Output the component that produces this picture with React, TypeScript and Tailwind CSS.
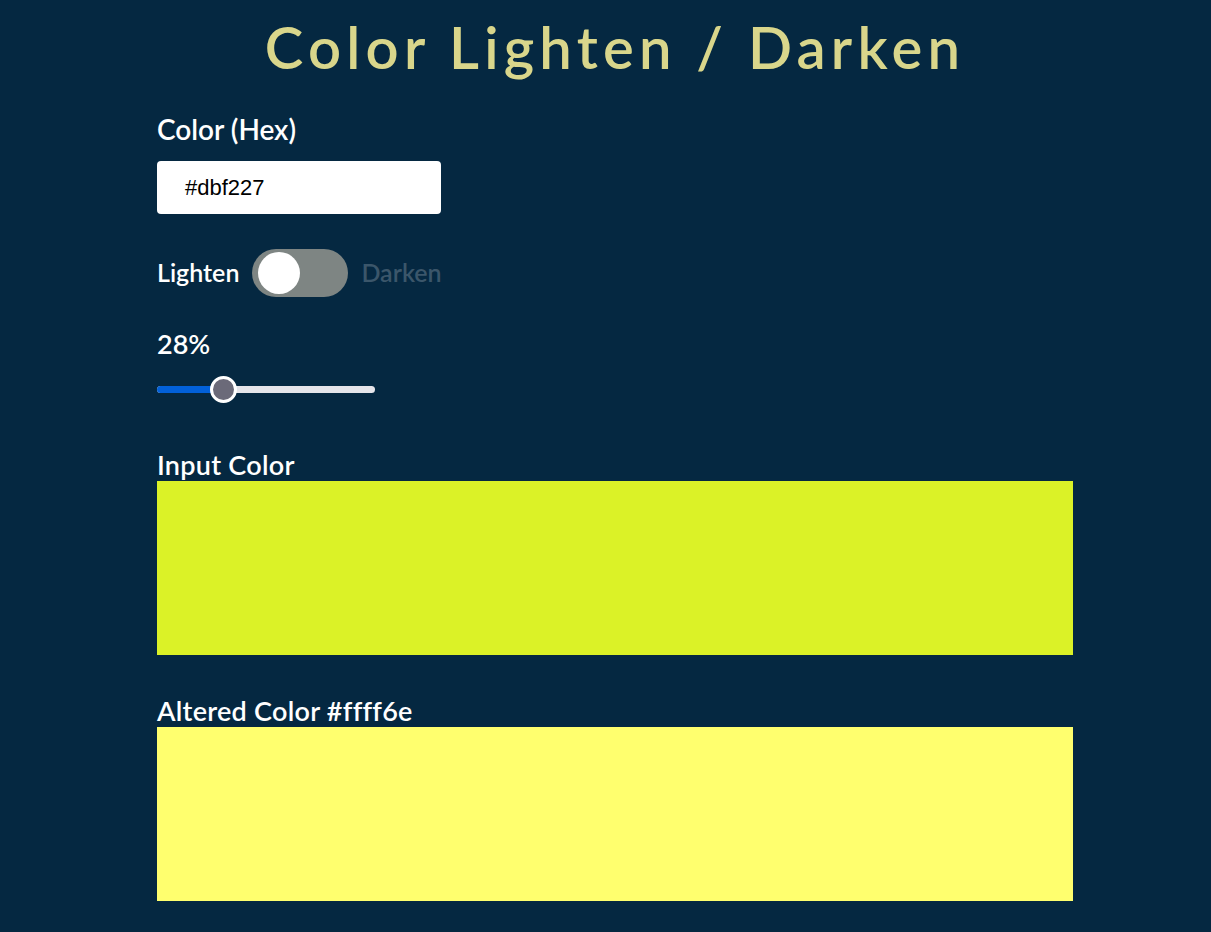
const INPUT = "#dbf227"
const ALTERED = "#ffff6e"
const AMOUNT = 28

function Toggle() {
  return (
    <div className="w-[96px] h-[48px] rounded-full bg-[#7e8583] p-[3px] flex items-center">
      <div className="w-[42px] h-[42px] rounded-full bg-white ml-[3px]" />
    </div>
  )
}

// track 218px wide, thumb 27px: thumb centre sits where a native range input puts it
function Slider({ value }: { value: number }) {
  const center = (218 - 27) * (value / 100) + 13.5
  return (
    <div className="relative w-[218px] h-[28px] flex items-center">
      <div className="w-full h-[7px] rounded-full bg-[#e6e5ea] flex overflow-hidden">
        <div className="h-full bg-[#0260d8]" style={{ width: `${center}px` }} />
      </div>
      <div
        className="absolute top-[1px] w-[27px] h-[27px] rounded-full bg-[#6b6a79] border-[3px] border-white"
        style={{ left: `${center - 13.5}px` }}
      />
    </div>
  )
}

function Swatch({ label, color }: { label: string; color: string }) {
  return (
    <div>
      <div className="text-[27px] leading-[32px] tracking-[0.01em] text-white font-semibold">{label}</div>
      <div className="w-full h-[174px]" style={{ background: color }} />
    </div>
  )
}

export default function App() {
  return (
    <div className="min-h-[932px] w-full bg-[#052841] font-['Lato',sans-serif] overflow-hidden">
      <div className="ml-[115px] w-[1000px] px-[42px]">
        <h1 className="text-center text-[58px] leading-[70px] pt-[12px] tracking-[0.09em] text-[#d9d68b] font-semibold">
          Color Lighten / Darken
        </h1>
        <div className="mt-[32px] text-[28px] leading-[30px] text-white font-semibold">Color (Hex)</div>
        <div className="mt-[17px] w-[284px] h-[53px] rounded-[4px] bg-white flex items-center pl-[28px] text-[22px] text-black font-['Liberation_Sans',sans-serif]">
          {INPUT}
        </div>
        <div className="mt-[35px] flex items-center gap-[13px]">
          <span className="text-[25px] text-white font-semibold">Lighten</span>
          <Toggle />
          <span className="text-[25px] text-[#3b566a] font-semibold">Darken</span>
        </div>
        <div className="mt-[32px] text-[27px] leading-[30px] text-white font-semibold">{AMOUNT}%</div>
        <div className="mt-[16px]">
          <Slider value={AMOUNT} />
        </div>
        <div className="mt-[46px]">
          <Swatch label="Input Color" color={INPUT} />
        </div>
        <div className="mt-[40px]">
          <Swatch label={`Altered Color ${ALTERED}`} color={ALTERED} />
        </div>
      </div>
    </div>
  )
}
